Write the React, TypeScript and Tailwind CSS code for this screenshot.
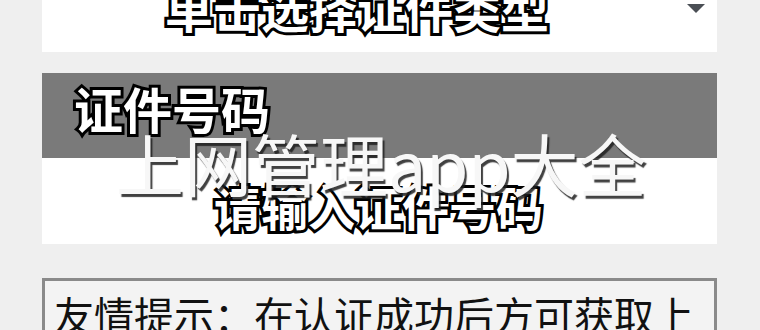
import React from "react";

const cjk = "font-['Noto_Sans_CJK_SC','Noto_Sans',sans-serif]";
const outline =
  "text-white font-bold [-webkit-text-stroke:6px_#000] [paint-order:stroke_fill] [text-shadow:0_0_3px_rgba(0,0,0,0.5)]";

export default function App() {
  return (
    <div className={`relative w-[760px] h-[330px] overflow-hidden bg-[#efefef] ${cjk}`}>
      <div className="flex flex-col pl-[42px] pr-[43px]">
        {/* select card */}
        <div className="h-[52px] bg-white flex items-start overflow-hidden relative">
          <div className={`pl-[123px] mt-[-25px] text-[48px] leading-[64px] ${outline}`}>
            单击选择证件类型
          </div>
          <div className="absolute right-[12px] top-[4px] w-0 h-0 border-l-[9px] border-r-[9px] border-t-[9px] border-l-transparent border-r-transparent border-t-[#4a4f55]" />
        </div>

        {/* id number block */}
        <div className="mt-[21px] h-[85px] bg-[#7a7a7a] flex items-start">
          <div className={`pl-[32px] pt-[7px] text-[49px] leading-[56px] ${outline}`}>证件号码</div>
        </div>
        <div className="h-[86px] bg-white flex items-start justify-center">
          <div className={`pt-[20px] pr-[2px] text-[47px] leading-[56px] ${outline}`}>请输入证件号码</div>
        </div>

        {/* tip */}
        <div className="mt-[34px] h-[80px] border-[3px] border-[#8a8a8a] bg-[#f3f3f3] pl-[9px] pt-[7px]">
          <div className="text-[40px] leading-[52px] text-[#111] whitespace-nowrap">友情提示：在认证成功后方可获取上</div>
        </div>
      </div>

      {/* watermark */}
      <div className="absolute left-[116px] top-[117px] text-[68px] leading-[92px] font-normal text-[#f7f7f7] whitespace-nowrap [text-shadow:2px_3px_1px_rgba(30,30,30,0.85)]">
        上网管理app大全
      </div>
    </div>
  );
}
